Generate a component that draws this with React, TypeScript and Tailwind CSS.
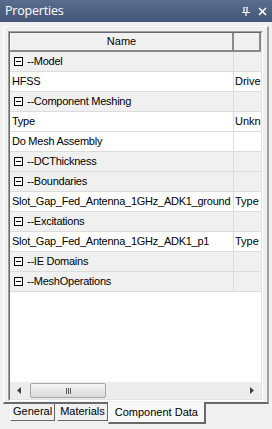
import React from "react";

type Row = {
  name: string;
  value?: string;
  category?: boolean;
};

const rows: Row[] = [
  { name: "--Model", category: true },
  { name: "HFSS", value: "Driven" },
  { name: "--Component Meshing", category: true },
  { name: "Type", value: "Unknown" },
  { name: "Do Mesh Assembly", value: "" },
  { name: "--DCThickness", category: true },
  { name: "--Boundaries", category: true },
  { name: "Slot_Gap_Fed_Antenna_1GHz_ADK1_ground", value: "Type" },
  { name: "--Excitations", category: true },
  { name: "Slot_Gap_Fed_Antenna_1GHz_ADK1_p1", value: "Type" },
  { name: "--IE Domains", category: true },
  { name: "--MeshOperations", category: true },
];

function MinusBox() {
  return (
    <span className="relative mr-[4px] inline-block h-[9px] w-[9px] shrink-0 border border-black bg-white">
      <span className="absolute left-[1px] top-[3px] h-px w-[5px] bg-black" />
    </span>
  );
}

function PropertyRow({ row }: { row: Row }) {
  const bg = row.category ? "bg-[#f0f0f0]" : "bg-white";
  return (
    <div className={`flex h-[20px] border-b border-[#dcdcdc] ${bg}`}>
      <div className="flex w-[224px] shrink-0 items-center overflow-hidden whitespace-nowrap border-r border-[#dcdcdc] pl-[2px]">
        {row.category && (
          <span className="ml-[2px] flex items-center">
            <MinusBox />
          </span>
        )}
        <span className="tracking-[-0.25px]">{row.name}</span>
      </div>
      <div className="flex flex-1 items-center overflow-hidden whitespace-nowrap pl-[1px]">
        {row.value}
      </div>
    </div>
  );
}

function TabButton({ label, active }: { label: string; active?: boolean }) {
  if (active) {
    return (
      <div className="-mt-[2px] flex h-[22px] items-end border-l border-white border-r-2 border-b-2 border-r-[#696969] border-b-[#696969] bg-[#f7f7f7] px-[6px] pb-[2px]">
        {label}
      </div>
    );
  }
  return (
    <div className="flex h-[17px] items-center border-l border-white border-r border-b border-r-[#696969] border-b-[#696969] px-[2px] pb-[1px]">
      {label}
    </div>
  );
}

export default function App() {
  return (
    <div className="flex h-[429px] w-[272px] flex-col overflow-hidden bg-[#f0f0f0] font-['Liberation_Sans',Arial,sans-serif] text-[11px] text-black">
      <div className="flex h-[22px] shrink-0 items-center justify-between bg-linear-to-b from-[#5a6d8f] to-[#435678] pl-[5px] pr-[5px] text-white">
        <span className="font-['Open_Sans',sans-serif] text-[12.5px] tracking-[-0.2px]">Properties</span>
        <div className="flex items-center gap-[8px]">
          <svg width="8" height="9" viewBox="0 0 8 9" className="mt-[1px]">
            <path d="M2 0h4M2 0v5M5 0v5M0 5.5h8M4 5.5v3.5" stroke="white" strokeWidth="1.2" fill="none" />
          </svg>
          <svg width="9" height="9" viewBox="0 0 9 9">
            <path d="M1 1l7 7M8 1l-7 7" stroke="white" strokeWidth="1.6" fill="none" />
          </svg>
        </div>
      </div>

      <div className="ml-[3px] mt-[4px] flex h-[378px] w-[266px] flex-col border-l border-t border-white border-r-2 border-b-2 border-r-[#a0a0a0] border-b-[#696969] px-[4px] pt-[4px] pb-[1px]">
        <div className="flex flex-1 flex-col border border-l-[#a0a0a0] border-t-[#a0a0a0] border-r-white border-b-white">
          <div className="flex flex-1 flex-col border border-l-[#696969] border-t-[#696969] border-r-[#e3e3e3] border-b-[#e3e3e3]">
            <div className="flex h-[19px] shrink-0 border-b-2 border-[#8a8a8a] bg-[#f0f0f0]">
              <div className="flex w-[224px] shrink-0 items-center justify-center border-r-2 border-[#8a8a8a] border-l border-l-white">
                Name
              </div>
              <div className="flex-1 border-r-2 border-[#8a8a8a]" />
            </div>

            <div className="flex-1 bg-white">
              {rows.map((row) => (
                <PropertyRow key={row.name} row={row} />
              ))}
            </div>

            <div className="flex h-[17px] shrink-0 items-center bg-[#ededed] px-[4px]">
              <svg width="4" height="7" viewBox="0 0 4 7" className="ml-[3px]">
                <path d="M4 0L0 3.5L4 7z" fill="#404040" />
              </svg>
              <div className="ml-[9px] flex h-[15px] w-[76px] items-center justify-center rounded-[2px] border border-[#a8a8a8] bg-linear-to-b from-[#f5f5f5] to-[#dadada]">
                <div className="flex gap-[1px]">
                  <span className="h-[6px] w-px bg-[#555]" />
                  <span className="h-[6px] w-px bg-[#555]" />
                  <span className="h-[6px] w-px bg-[#555]" />
                </div>
              </div>
              <div className="flex-1" />
              <svg width="4" height="7" viewBox="0 0 4 7" className="mr-[3px]">
                <path d="M0 0L4 3.5L0 7z" fill="#404040" />
              </svg>
            </div>
          </div>
        </div>
      </div>

      <div className="ml-[10px] flex items-start">
        <TabButton label="General" />
        <span className="w-[2px]" />
        <TabButton label="Materials" />
        <TabButton label="Component Data" active />
      </div>
    </div>
  );
}
